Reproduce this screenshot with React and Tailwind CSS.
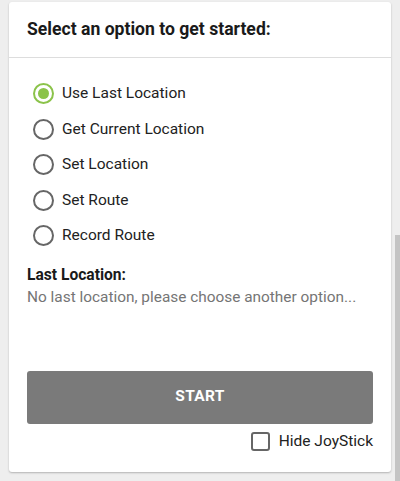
import { useState } from 'react';

const options = ['Use Last Location', 'Get Current Location', 'Set Location', 'Set Route', 'Record Route'];

const Radio = ({ checked }) => (
  <span
    className={`flex items-center justify-center w-[21px] h-[21px] rounded-full border-2 ${
      checked ? 'border-[#8bc34a]' : 'border-[#666666]'
    }`}
  >
    {checked && <span className="w-[11px] h-[11px] rounded-full bg-[#8bc34a]" />}
  </span>
);

export default function App() {
  const [selected, setSelected] = useState(0);
  const [hideJoy, setHideJoy] = useState(false);

  return (
    <div className="relative w-[400px] h-[481px] bg-[#eeeeee] overflow-hidden font-['Roboto',sans-serif]">
      {/* scrollbar */}
      <div className="absolute right-0 top-[235px] w-[5px] h-[246px] bg-[#c4c4c4]" />

      <div className="pt-[2px] pl-[9px]">
        <div className="w-[382px] h-[470px] bg-white rounded-[3px] shadow-[0_1px_2px_rgba(0,0,0,0.25)] flex flex-col">
          {/* Header */}
          <div className="h-[56px] flex items-center px-[18px] border-b border-[#dddddd]">
            <h3 className="text-[17.6px] font-bold text-[#1a1a1a]">Select an option to get started:</h3>
          </div>

          {/* Content */}
          <div className="flex-1 flex flex-col px-[18px]">
            <div className="mt-[18px] flex flex-col">
              {options.map((opt, i) => (
                <button
                  key={opt}
                  type="button"
                  onClick={() => setSelected(i)}
                  className="h-[35.5px] flex items-center gap-[8px] pl-[6px] text-left"
                >
                  <Radio checked={selected === i} />
                  <span className="text-[15.5px] text-[#222222]">{opt}</span>
                </button>
              ))}
            </div>

            <div className="mt-[10px]">
              <p className="text-[15.6px] font-bold text-[#1a1a1a] leading-[22px]">Last Location:</p>
              <p className="text-[15.4px] text-[#757575] leading-[22px] whitespace-nowrap">No last location, please choose another option...</p>
            </div>

            <button
              type="button"
              className="mt-[63px] h-[53px] w-full bg-[#7a7a7a] rounded-[3px] text-white text-[15.5px] font-bold tracking-[0.3px]"
            >
              START
            </button>

            <label className="mt-[6px] self-end flex items-center gap-[9px] cursor-pointer">
              <input
                type="checkbox"
                checked={hideJoy}
                onChange={(e) => setHideJoy(e.target.checked)}
                className="appearance-none w-[19px] h-[19px] border-2 border-[#666666] rounded-[3px] checked:bg-[#8bc34a] checked:border-[#8bc34a]"
              />
              <span className="text-[15.5px] text-[#222222]">Hide JoyStick</span>
            </label>
          </div>
        </div>
      </div>
    </div>
  );
}
